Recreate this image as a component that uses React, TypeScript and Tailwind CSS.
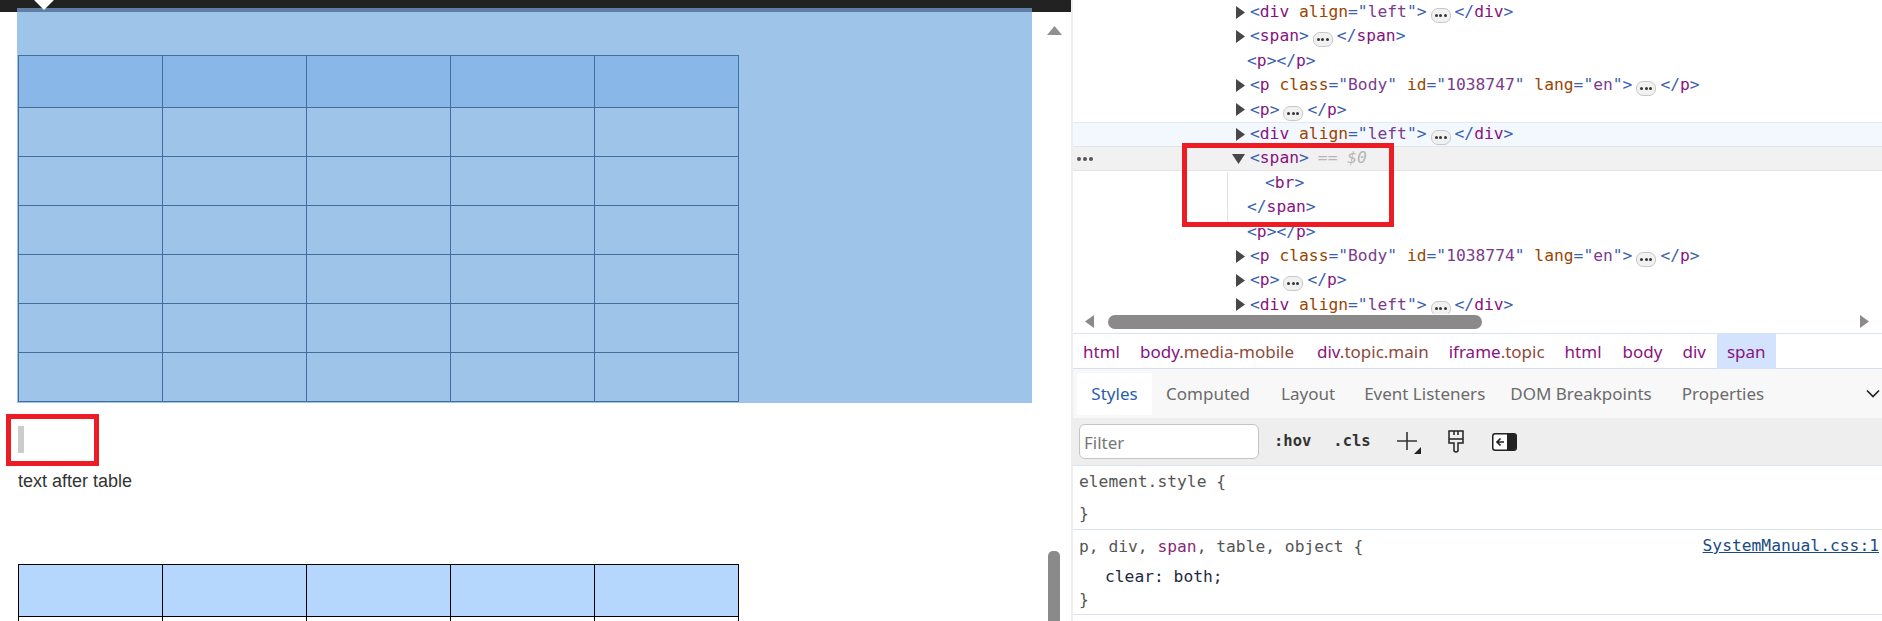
const mono = "font-['DejaVu_Sans_Mono','Liberation_Mono',monospace]";
const ui = "font-['Noto_Sans','Open_Sans',sans-serif]";

type Part = { t: string; c: "b" | "n" | "a" | "v" };
type Row = { arrow?: "r" | "d"; pl: number; parts: Part[]; more?: boolean; tail?: Part[]; bg?: string };

const tone = { b: "text-[#3b5fb0]", n: "text-[#881280]", a: "text-[#994500]", v: "text-[#7a3b8f]" };

const open = (name: string, attrs: [string, string][] = []): Part[] => [
  { t: "<", c: "b" },
  { t: name, c: "n" },
  ...attrs.flatMap(([k, v]): Part[] => [
    { t: " " + k, c: "a" },
    { t: '="', c: "b" },
    { t: v, c: "v" },
    { t: '"', c: "b" },
  ]),
  { t: ">", c: "b" },
];
const close = (name: string): Part[] => [
  { t: "</", c: "b" },
  { t: name, c: "n" },
  { t: ">", c: "b" },
];

const divLeft = open("div", [["align", "left"]]);
const bodyP = (id: string) => open("p", [["class", "Body"], ["id", id], ["lang", "en"]]);

const rows: Row[] = [
  { arrow: "r", pl: 0, parts: divLeft, more: true, tail: close("div") },
  { arrow: "r", pl: 0, parts: open("span"), more: true, tail: close("span") },
  { pl: -3, parts: [...open("p"), ...close("p")] },
  { arrow: "r", pl: 0, parts: bodyP("1038747"), more: true, tail: close("p") },
  { arrow: "r", pl: 0, parts: open("p"), more: true, tail: close("p") },
  { arrow: "r", pl: 0, parts: divLeft, more: true, tail: close("div"), bg: "bg-[#f3f8fe] border-t border-[#e3e9f2]" },
  { arrow: "d", pl: 0, parts: open("span"), bg: "bg-[#f1f1f1] border-y border-[#e4e4e4]" },
  { pl: 15, parts: open("br") },
  { pl: -3, parts: close("span") },
  { pl: -3, parts: [...open("p"), ...close("p")] },
  { arrow: "r", pl: 0, parts: bodyP("1038774"), more: true, tail: close("p") },
  { arrow: "r", pl: 0, parts: open("p"), more: true, tail: close("p") },
  { arrow: "r", pl: 0, parts: divLeft, more: true, tail: close("div") },
];

function Text({ parts }: { parts: Part[] }) {
  return (
    <>
      {parts.map((p, i) => (
        <span key={i} className={tone[p.c]}>
          {p.t}
        </span>
      ))}
    </>
  );
}

function More() {
  return (
    <span className="mx-[4px] inline-flex h-[15px] w-[20px] items-center justify-center gap-[1.5px] rounded-[7px] border border-[#c8c8c8] bg-[#f1f1f1] align-baseline">
      <i className="size-[3px] rounded-full bg-[#333]" />
      <i className="size-[3px] rounded-full bg-[#333]" />
      <i className="size-[3px] rounded-full bg-[#333]" />
    </span>
  );
}

function TreeRow({ row, index }: { row: Row; index: number }) {
  return (
    <div className={`relative flex h-[24.4px] items-center whitespace-pre pl-[177px] text-[16.3px] ${row.bg ?? ""}`}>
      {index === 6 && (
        <span className="absolute left-[4px] flex gap-[2px]">
          <i className="size-[4px] rounded-full bg-[#555]" />
          <i className="size-[4px] rounded-full bg-[#555]" />
          <i className="size-[4px] rounded-full bg-[#555]" />
        </span>
      )}
      {row.arrow === "r" && (
        <svg className="absolute left-[162px]" width="10" height="13" viewBox="0 0 10 13">
          <path d="M1 0 L10 6.5 L1 13 Z" fill="#474747" />
        </svg>
      )}
      {row.arrow === "d" && (
        <svg className="absolute left-[159px]" width="13" height="10" viewBox="0 0 13 10">
          <path d="M0 0 H13 L6.5 10 Z" fill="#474747" />
        </svg>
      )}
      <span style={{ marginLeft: row.pl }}>
        <Text parts={row.parts} />
        {index === 6 && <span className="ml-[9px] italic text-[#b5b5b5]">== $0</span>}
        {row.more && <More />}
        {row.tail && <Text parts={row.tail} />}
      </span>
    </div>
  );
}

function DataTable({ dark }: { dark?: boolean }) {
  const border = dark ? "border-black" : "border-[#41709f]";
  const body = dark ? [0] : [0, 1, 2, 3, 4, 5];
  const head = dark ? "bg-[#b5d7fd]" : "bg-[#88b7e8]";
  return (
    <table className="w-[721px] table-fixed border-collapse">
      <tbody>
        <tr className="h-[52px]">
          {[0, 1, 2, 3, 4].map((c) => (
            <td key={c} className={`border ${border} ${head}`} />
          ))}
        </tr>
        {body.map((r) => (
          <tr key={r} className="h-[49px]">
            {[0, 1, 2, 3, 4].map((c) => (
              <td key={c} className={`border ${border}`} />
            ))}
          </tr>
        ))}
      </tbody>
    </table>
  );
}

const crumbs = [
  { a: "html", ml: 10 },
  { a: "body", b: ".media-mobile", ml: 20 },
  { a: "div", b: ".topic.main", ml: 23 },
  { a: "iframe", b: ".topic", ml: 20 },
  { a: "html", ml: 20 },
  { a: "body", ml: 21 },
  { a: "div", ml: 20 },
];

const tabs = ["Computed", "Layout", "Event Listeners", "DOM Breakpoints", "Properties"];

export default function App() {
  return (
    <div className="relative flex h-[621px] w-[1882px] overflow-hidden bg-white">
      {/* page preview */}
      <div className="relative w-[1071px] shrink-0">
        <div className="relative h-[12px] bg-[#222222]">
          <div className="absolute left-[17px] top-[8px] h-[4px] w-[1015px] bg-[#5f80a3]" />
          <div className="absolute left-[37px] top-[-7px] size-[14px] rotate-45 bg-white" />
        </div>
        <div className="ml-[17px] h-[391px] w-[1015px] bg-[#9fc4e9] pl-[1px] pt-[43px]">
          <DataTable />
        </div>
        <div className="ml-[18px] mt-[23px] h-[27px] w-[6px] bg-[#cccccc]" />
        <p className="ml-[18px] mt-[15px] font-['Liberation_Sans',Arial,sans-serif] text-[18px] leading-[26px] text-[#333]">
          text after table
        </p>
        <div className="ml-[18px] mt-[70px]">
          <DataTable dark />
        </div>
        {/* preview scrollbar */}
        <svg className="absolute left-[1047px] top-[26px]" width="15" height="9" viewBox="0 0 15 9">
          <path d="M7.5 0 L15 9 H0 Z" fill="#8f8f8f" />
        </svg>
        <div className="absolute left-[1048px] top-[551px] h-[70px] w-[12px] rounded-t-[5px] bg-[#8a8a8a]" />
      </div>

      {/* devtools */}
      <div className={`flex min-w-0 flex-1 flex-col border-l-2 border-[#eeeeee] ${ui}`}>
        <div className={`relative h-[314px] overflow-hidden ${mono}`}>
          {rows.map((r, i) => (
            <TreeRow key={i} row={r} index={i} />
          ))}
          <div className="absolute left-[154px] top-[172px] h-[50px] w-px bg-[#dde3ee]" />
        </div>

        <div className="relative h-[20px] border-b border-[#dbe3ef]">
          <svg className="absolute left-[12px] top-[1px]" width="9" height="13" viewBox="0 0 9 13">
            <path d="M9 0 V13 L0 6.5 Z" fill="#8a8a8a" />
          </svg>
          <div className="absolute left-[35px] top-[1px] h-[14px] w-[374px] rounded-[7px] bg-[#8a8a8a]" />
          <svg className="absolute left-[787px] top-[1px]" width="9" height="13" viewBox="0 0 9 13">
            <path d="M0 0 V13 L9 6.5 Z" fill="#8a8a8a" />
          </svg>
        </div>

        <div className="flex h-[35px] items-center border-b border-[#d5deea] pt-[2px] text-[17px] text-[#881280]">
          {crumbs.map((c, i) => (
            <span key={i} style={{ marginLeft: c.ml }}>
              {c.a}
              {c.b && <span className="text-[#8f4a3a]">{c.b}</span>}
            </span>
          ))}
          <span className="-mt-[2px] ml-[11px] flex h-[35px] items-center bg-[#d3e3fd] px-[10px] pt-[2px]">span</span>
        </div>

        <div className="relative flex h-[49px] items-center bg-[#f8f8f8] pl-[4px] text-[17px] text-[#6b6b6b]">
          <span className="flex h-[42px] w-[75px] items-center justify-center bg-white text-[#2a5db0]">Styles</span>
          {tabs.map((t, i) => (
            <span key={t} className={["ml-[14px]", "ml-[31px]", "ml-[29px]", "ml-[25px]", "ml-[30px]"][i]}>
              {t}
            </span>
          ))}
          <svg className="absolute right-[1px] top-[19px]" width="16" height="12" viewBox="0 0 16 12" fill="none">
            <path d="M2 2.5 L8 8.5 L14 2.5" stroke="#222" strokeWidth="1.7" />
          </svg>
        </div>

        <div className="flex h-[48px] items-center border-b border-[#dbe3ef] bg-[#eeeeee] pl-[6px]">
          <div className="flex h-[35px] w-[180px] items-center rounded-[6px] border border-[#c4c4c4] bg-white pl-[4px] pt-[2px] text-[17px] text-[#777]">
            Filter
          </div>
          <span className={`ml-[15px] text-[15.5px] font-bold text-[#333] ${mono}`}>:hov</span>
          <span className={`ml-[22px] text-[15.5px] font-bold text-[#333] ${mono}`}>.cls</span>
          <svg className="ml-[25px]" width="26" height="24" viewBox="0 0 26 24" fill="none">
            <path d="M11 2 V20 M1 11 H21" stroke="#333" strokeWidth="1.6" />
            <path d="M25 17 V24 H18 Z" fill="#222" />
          </svg>
          <svg className="ml-[25px]" width="18" height="24" viewBox="0 0 18 24" fill="none">
            <path d="M2 1 H16 V13 H11 V21 Q9 23 7 21 V13 H2 Z M2 9 H16 M7 1 V5 M11 1 V5" stroke="#222" strokeWidth="1.5" />
          </svg>
          <svg className="ml-[27px]" width="25" height="18" viewBox="0 0 25 18">
            <rect x="0.75" y="0.75" width="23.5" height="16.5" rx="2.5" fill="#fff" stroke="#222" strokeWidth="1.5" />
            <path d="M15 1 H22 Q24 1 24 3 V15 Q24 17 22 17 H15 Z" fill="#222" />
            <path d="M12 9 H5 M8.5 5.5 L5 9 L8.5 12.5" stroke="#222" strokeWidth="1.7" fill="none" />
          </svg>
        </div>

        <div className={`text-[16.3px] text-[#555] ${mono}`}>
          <div className="h-[64px] border-b border-[#dbe3ef] pl-[6px] leading-[32px]">
            <div>element.style {"{"}</div>
            <div>{"}"}</div>
          </div>
          <div className="relative h-[85px] border-b border-[#dbe3ef] pl-[6px] pt-[3px]">
            <div className="leading-[28px]">
              p, div, <span className="text-[#8a2a78]">span</span>, table, object {"{"}
            </div>
            <div className="pl-[26px] leading-[32px] text-[#1c2a44]">clear: both;</div>
            <div className="-mt-[3px] leading-[20px]">{"}"}</div>
            <a className="absolute right-[3px] top-[4px] text-[#1a4a84] underline">SystemManual.css:1</a>
          </div>
        </div>
      </div>

      {/* red annotation boxes */}
      <div className="absolute left-[6px] top-[414px] h-[52px] w-[93px] border-[5px] border-[#ed1c24]" />
      <div className="absolute left-[1182px] top-[143px] h-[84px] w-[212px] border-[5px] border-[#ed1c24]" />
    </div>
  );
}
